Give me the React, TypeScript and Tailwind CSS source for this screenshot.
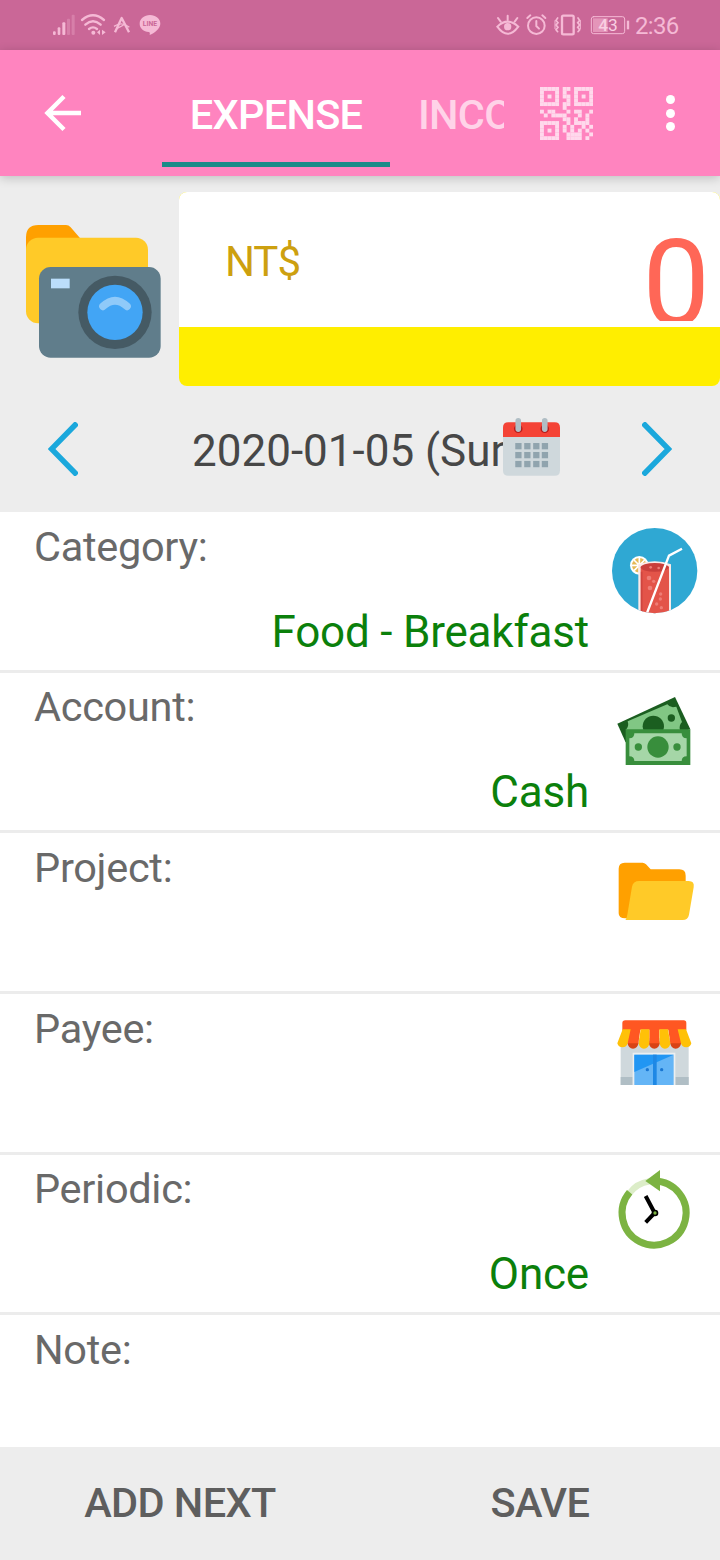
import type { ReactNode } from "react";

const qrRows = [
  "#####.##.#####",
  "#...#.#..#...#",
  "#.#.#.##.#.#.#",
  "#...#..#.#...#",
  "#####.##.#####",
  "......#.......",
  "#.##...#.##..#",
  ".#.####...#.#.",
  "......##.#..#.",
  "#####..#.####.",
  "#...#.#.#..#.#",
  "#.#.#.#.#.#.#.",
  "#...#..####..#",
  "#####..####.#.",
];

function StatusLeft() {
  return (
    <svg viewBox="0 0 420 150" className="ml-10 h-[50px] w-[140px]" fill="#f5b9d5" stroke="none">
      <rect x="39" y="94" width="8" height="11" rx="3" />
      <rect x="53" y="82" width="8" height="23" rx="3" />
      <rect x="67" y="67" width="9" height="38" rx="3" />
      <g opacity=".3">
        <rect x="81" y="56" width="9" height="49" rx="3" />
        <rect x="95" y="44" width="9" height="61" rx="3" />
      </g>
      <g fill="none" stroke="#f5b9d5" strokeWidth="7" strokeLinecap="round">
        <path d="M126 60Q159 32 192 60M136 74Q159 54 182 74M147 87Q159 77 171 87" />
      </g>
      <circle cx="160" cy="98" r="6" />
      <path d="M171 97l9-8v16zM197 97l-11-8v16z" />
      <g fill="none" stroke="#f5b9d5" strokeWidth="7" strokeLinejoin="round">
        <path d="M225 97L245 54L267 97" />
        <path d="M222 79Q246 63 268 82M230 86L251 75" strokeWidth="4" />
      </g>
      <path d="M330 45c-17 0-31 11-31 26 0 14 12 23 27 25 4 1 4 4 3 9 14-6 32-19 32-34 0-15-14-26-31-26z" />
      <text
        x="330"
        y="79"
        textAnchor="middle"
        fontSize="20"
        fontWeight="700"
        fill="#ca6797"
        textLength="43"
        lengthAdjust="spacingAndGlyphs"
        fontFamily="Roboto, sans-serif"
      >
        LINE
      </text>
    </svg>
  );
}

function StatusRight() {
  return (
    <svg viewBox="0 0 465 150" className="h-[50px] w-[155px]" fill="none" stroke="#f5b9d5" strokeWidth="6" strokeLinecap="round">
      {/* Eye */}
      <path d="M52 80Q83 50 115 80Q83 123 52 80z" strokeWidth="6" />
      <path d="M83 60V47M62 65L54 54M104 65L112 54" />
      <circle cx="83" cy="80" r="11" fill="#f5b9d5" stroke="none" />
      {/* Alarm */}
      <circle cx="169" cy="77" r="25" strokeWidth="6" />
      <path d="M169 63V78L177 86M142 54L151 46M196 54L187 46" />
      {/* Vibrate */}
      <rect x="246" y="47" width="35" height="56" rx="4" strokeWidth="7" />
      <path d="M233 54l-5 7 6 7-6 7 6 7-6 7 5 6M294 54l5 7-6 7 6 7-6 7 6 7-5 6" strokeWidth="5" />
      <path d="M225 62v24M301 62v24" strokeWidth="3" />
      {/* Battery */}
      <rect x="334" y="50" width="100" height="51" rx="7" strokeWidth="3" />
      <rect x="339" y="55" width="44" height="41" fill="#e495b9" stroke="none" />
      <path d="M444 62v26" strokeWidth="7" strokeLinecap="butt" />
      <text x="384" y="93" textAnchor="middle" fontSize="52" fill="#f9cfe2" stroke="none" fontFamily="Roboto, sans-serif">
        <tspan fontWeight="500">4</tspan>3
      </text>
    </svg>
  );
}

function QrIcon() {
  return (
    <svg viewBox="0 0 14 14" className="h-[53px] w-[53px]" fill="#ffd9ec">
      {qrRows.map((row, y) =>
        row.split("").map((c, x) => (c === "#" ? <rect key={`${x}-${y}`} x={x} y={y} width="1.03" height="1.03" /> : null))
      )}
    </svg>
  );
}

function CameraFolder() {
  return (
    <svg viewBox="0 0 537 630" className="h-[210px] w-[179px]">
      <path d="M78 240V172Q78 135 115 135H198Q206 135 212 142L245 180V240z" fill="#ffa000" />
      <rect x="78" y="173" width="366" height="257" rx="36" fill="#ffca28" />
      <rect x="117" y="261" width="365" height="272" rx="35" fill="#607d8b" />
      <rect x="153" y="296" width="56" height="29" fill="#bbdefb" />
      <circle cx="345" cy="397" r="110" fill="#455a64" />
      <circle cx="345" cy="397" r="83" fill="#42a5f5" />
      <path d="M309 379Q345 345 381 379" fill="none" stroke="#90caf9" strokeWidth="23" strokeLinecap="round" />
    </svg>
  );
}

function CalendarIcon() {
  return (
    <svg viewBox="0 0 172 174" className="mb-[4px] h-[58px] w-[57px] shrink-0">
      <path d="M0 40H172V158Q172 174 156 174H16Q0 174 0 158z" fill="#cfd8dc" />
      <path d="M0 57V28Q0 12 16 12H156Q172 12 172 28V57z" fill="#f44336" />
      <circle cx="46" cy="32" r="13" fill="#b71c1c" />
      <circle cx="126" cy="32" r="13" fill="#b71c1c" />
      <path d="M46 8V33M126 8V33" stroke="#b0bec5" strokeWidth="17" strokeLinecap="round" />
      <g fill="#90a4ae">
        {[75, 102, 129].map((y) =>
          [37, 64, 91, 117].map((x) => <rect key={`${x}-${y}`} x={x} y={y} width="19" height="19" />)
        )}
      </g>
    </svg>
  );
}

function DrinkIcon() {
  return (
    <svg viewBox="0 0 330 330" className="mt-[3px] h-[110px] w-[110px]">
      <defs>
        <clipPath id="plate">
          <circle cx="164" cy="167" r="128" />
        </clipPath>
      </defs>
      <circle cx="164" cy="167" r="128" fill="#2fa8d3" />
      <g clipPath="url(#plate)">
        <circle cx="118" cy="151" r="28" fill="#fff" />
        <circle cx="118" cy="151" r="22" fill="#e5b956" />
        <path d="M118 128V174M95 151H141M102 135L134 167M134 135L102 167" stroke="#fff" strokeWidth="5" />
        <path d="M115 148Q164 130 213 148V300H115z" fill="#fbe9e7" />
        <path d="M122 155Q164 138 207 155V300H122z" fill="#e35449" />
        <ellipse cx="164" cy="157" rx="42" ry="13" fill="#c93f3b" />
        <path d="M125 170V300" stroke="#cf453f" strokeWidth="5" />
        <g fill="#ee7d75">
          <circle cx="147" cy="189" r="7" />
          <circle cx="161" cy="199" r="5" />
          <circle cx="150" cy="219" r="7" />
          <circle cx="182" cy="237" r="5" />
          <circle cx="181" cy="252" r="5" />
          <circle cx="170" cy="267" r="5" />
          <circle cx="184" cy="278" r="5" />
          <circle cx="152" cy="157" r="4" />
          <circle cx="176" cy="159" r="4" />
        </g>
        <path d="M141 294L207 122L246 101" fill="none" stroke="#fff" strokeWidth="7" />
      </g>
    </svg>
  );
}

function CashIcon() {
  return (
    <svg viewBox="0 0 330 300" className="mt-[7px] h-[100px] w-[110px]">
      <path d="M52 131L225 51L271 148L90 200L76 185z" fill="#1b5e20" />
      <path d="M83 124L202 73Q210 85 229 80L246 126Q236 136 240 150H77Q88 140 83 124z" fill="#81c784" />
      <circle cx="160" cy="139" r="32" fill="#1b5e20" />
      <circle cx="214" cy="114" r="11" fill="#1b5e20" />
      <path d="M77 148H271V255H77z" fill="#388e3c" />
      <path d="M103 160H245Q245 175 260 175V229Q245 229 245 243H103Q103 229 88 229V175Q103 175 103 160z" fill="#a5d6a7" />
      <circle cx="174" cy="201" r="32" fill="#388e3c" />
      <circle cx="115" cy="201" r="11" fill="#388e3c" />
      <circle cx="231" cy="201" r="11" fill="#388e3c" />
    </svg>
  );
}

function FolderIcon() {
  return (
    <svg viewBox="0 0 330 270" className="mt-[17px] h-[90px] w-[110px]">
      <path d="M56 190V56Q56 38 74 38H128Q133 38 138 43L152 58H238Q257 58 257 77V205H75Q56 205 56 190z" fill="#ffa000" />
      <path d="M118 93H266Q284 93 281 112L267 194Q264 210 248 210H75Q79 209 82 194L96 110Q99 93 118 93z" fill="#ffca28" />
    </svg>
  );
}

function ShopIcon() {
  return (
    <svg viewBox="0 0 330 285" className="mt-[11px] h-[95px] w-[110px]">
      <path d="M62 100H266V240H62z" fill="#cfd8dc" />
      <path d="M62 216H98V240H62zM226 216H266V240H226z" fill="#b0bec5" />
      <path d="M98 143H226V240H98z" fill="#eceff1" />
      <path d="M103 149H221V240H103z" fill="#64b5f6" />
      <path d="M103 149H221L103 201z" fill="#2196f3" />
      <path d="M159 149H170V240H159z" fill="#1e88e5" />
      <circle cx="142" cy="194" r="5" fill="#1976d2" />
      <circle cx="185" cy="194" r="5" fill="#1976d2" />
      <g fill="#d84315">
        <circle cx="99" cy="115" r="16" />
        <circle cx="163" cy="115" r="16" />
        <circle cx="227" cy="115" r="16" />
      </g>
      <path d="M76 46H251Q259 46 259 54V74L243 115H211L205 74H178V115H148V74H121L115 115H83L67 74V54Q67 46 76 46z" fill="#ff5722" />
      <path
        d="M68 73H92L83 115A16 16 0 0 1 52 115zM122 73H148V115A16 16 0 0 1 116 115zM178 73H204L211 115A16 16 0 0 1 179 115zM233 73H258L274 115A16 16 0 0 1 243 115z"
        fill="#ffc107"
      />
    </svg>
  );
}

function PeriodIcon() {
  return (
    <svg viewBox="0 0 330 300" className="mt-[5px] h-[100px] w-[110px]">
      <path d="M89 99Q110 70 148 64" fill="none" stroke="#dcedc8" strokeWidth="19" />
      <path d="M89 97A96 96 0 1 0 163 63" fill="none" stroke="#7cb342" strokeWidth="21" />
      <path d="M136 63L180 30V94z" fill="#7cb342" />
      <path d="M137 108L164 159L137 187" fill="none" stroke="#000" strokeWidth="12" />
      <circle cx="165" cy="159" r="10" fill="#000" />
      <circle cx="165" cy="159" r="5" fill="#7cb342" />
    </svg>
  );
}

type RowProps = { label: string; value?: string; icon: ReactNode };

function Row({ label, value, icon }: RowProps) {
  return (
    <div className="flex h-[160.7px] border-b-[3px] border-[#ececec]">
      <div className="flex w-[589px] flex-col pl-[34px] pt-[9.5px] leading-[50px]">
        <span className="text-[41.5px] tracking-[-0.3px] text-[#696969]">{label}</span>
        <span className="mt-[35px] text-right text-[44px] tracking-[-0.2px] text-[#0b800b]">{value}</span>
      </div>
      <div className="ml-[11px]">{icon}</div>
    </div>
  );
}

function Chevron({ d }: { d: string }) {
  return (
    <svg viewBox="0 0 30 54" className="h-[54px] w-[30px] shrink-0" fill="none" stroke="#1ba8dc" strokeWidth="5.5">
      <path d={d} />
    </svg>
  );
}

export default function App() {
  return (
    <div className="flex h-[1560px] w-[720px] flex-col overflow-hidden bg-white font-['Roboto',sans-serif]">
      {/* Status bar */}
      <div className="flex h-[50px] shrink-0 items-center justify-between bg-[#ca6797]">
        <StatusLeft />
        <div className="flex items-center">
          <StatusRight />
          <span className="w-[85px] pt-px text-[24px] tracking-[-0.7px] text-[#f5b9d5]">2:36</span>
        </div>
      </div>

      {/* App bar */}
      <header className="z-10 flex h-[126px] shrink-0 bg-[#ff84bf] shadow-[0_2px_10px_rgba(0,0,0,0.2)]">
        <div className="flex w-[162px] items-center pl-[44px]">
          <svg viewBox="0 0 38 38" className="h-[38px] w-[38px]" fill="none" stroke="#fff" strokeWidth="4.5">
            <path d="M37 19H4M20 2.5L3.5 19L20 35.5" />
          </svg>
        </div>
        <nav className="flex w-[342px] overflow-hidden text-[41.5px] font-medium tracking-[-0.7px]">
          <div className="flex w-[228px] shrink-0 flex-col items-center">
            <span className="h-[112px] leading-[129px] text-white">EXPENSE</span>
            <div className="h-[5px] w-full bg-[#1b8b88]" />
          </div>
          <span className="shrink-0 pl-[28px] leading-[129px] text-[#ffd3e8]">INCOME</span>
        </nav>
        <div className="flex items-center pl-[36px]">
          <QrIcon />
        </div>
        <div className="ml-[73px] flex flex-col items-center justify-center gap-[4.5px]">
          <div className="h-[9px] w-[9px] rounded-full bg-white" />
          <div className="h-[9px] w-[9px] rounded-full bg-white" />
          <div className="h-[9px] w-[9px] rounded-full bg-white" />
        </div>
      </header>

      {/* Amount and date */}
      <section className="h-[336px] shrink-0 bg-[#ededed]">
        <div className="flex h-[210px] pt-[4px]">
          <CameraFolder />
          <div className="mt-[12px] flex h-[194px] w-[541px] flex-col overflow-hidden rounded-[8px] bg-[#ffee00]">
            <div className="flex h-[135px] justify-between bg-white pl-[46px] pr-[10px]">
              <span className="pt-[45px] text-[42px] leading-[50px] tracking-[-1px] text-[#cda00f]">NT$</span>
              <span className="h-[129px] overflow-hidden pt-[22px] text-[120px] leading-[141px] text-[#ff6757]">0</span>
            </div>
          </div>
        </div>
        <div className="flex h-[126px] items-center pl-[48px]">
          <Chevron d="M29 1L3.5 27L29 53" />
          <span className="ml-[114px] w-[311px] shrink-0 overflow-hidden whitespace-nowrap pt-[3px] text-[44px] leading-[56px] text-[#474747]">
            2020-01-05 (Sun)
          </span>
          <CalendarIcon />
          <div className="ml-[82px]">
            <Chevron d="M1 1L26.5 27L1 53" />
          </div>
        </div>
      </section>

      {/* Details */}
      <main className="flex-1">
        <Row label="Category:" value="Food - Breakfast" icon={<DrinkIcon />} />
        <Row label="Account:" value="Cash" icon={<CashIcon />} />
        <Row label="Project:" icon={<FolderIcon />} />
        <Row label="Payee:" icon={<ShopIcon />} />
        <Row label="Periodic:" value="Once" icon={<PeriodIcon />} />
        <div className="pl-[34px] pt-[9.5px] text-[41.5px] leading-[50px] tracking-[-0.3px] text-[#696969]">Note:</div>
      </main>

      {/* Actions */}
      <footer className="grid h-[113px] shrink-0 grid-cols-2 bg-[#ededed] text-[41.5px] font-medium tracking-[-0.6px] text-[#5e5e5e]">
        <button className="pb-px">ADD NEXT</button>
        <button className="pb-px">SAVE</button>
      </footer>
    </div>
  );
}
